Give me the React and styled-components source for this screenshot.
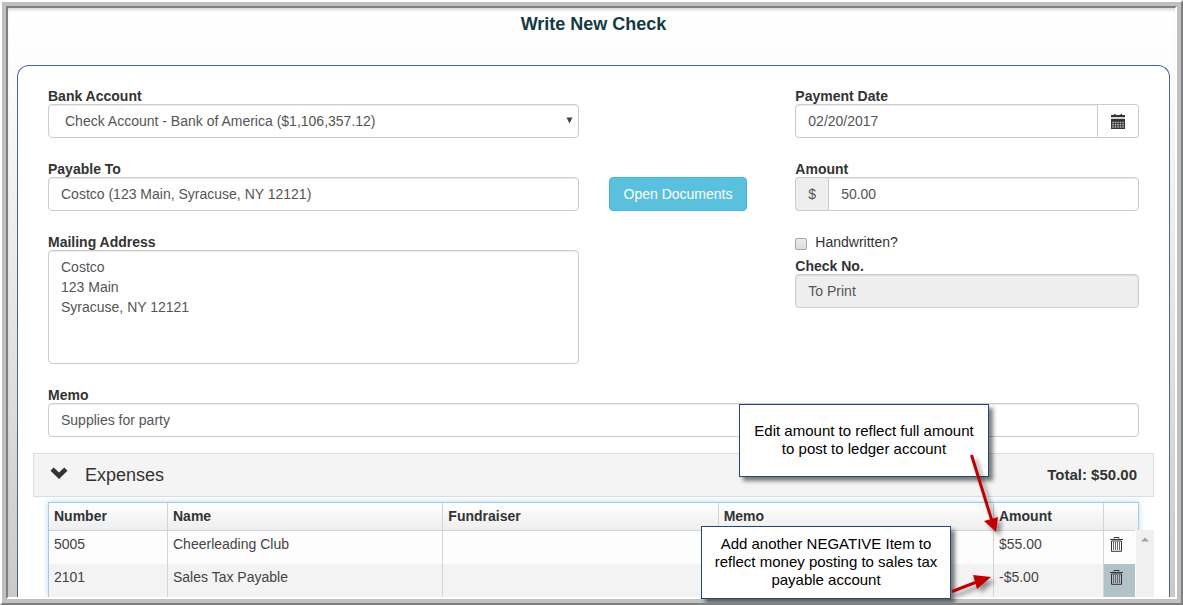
import React from 'react';
import styled, { createGlobalStyle } from 'styled-components';

const GlobalStyle = createGlobalStyle`
  * {
    box-sizing: border-box;
  }

  body {
    margin: 0;
    background: #fff;
    color: #333;
    font: 14px/20px "Liberation Sans", Arial, sans-serif;
  }

  input, select, textarea, button {
    font: inherit;
  }
`;

const Frame = styled.div`
  position: relative;
  height: 100vh;
  overflow: hidden;
  border: 2px solid;
  border-color: #fff #808080 #808080 #fff;
`;

const Bevel = styled.div`
  height: 100%;
  border: 4px solid #c0c0c0;
`;

const Window = styled.div`
  height: 100%;
  overflow: hidden;
  border: 2px solid;
  border-color: #808080 #fff #fff #808080;
  background: linear-gradient(#fff, #fdfdfd 9%, #cacaca);
  box-shadow: inset 0 3px 3px -1px rgba(0, 0, 0, 0.16);
  padding: 0 5px 0 9px;
`;

const Title = styled.h1`
  margin: 0;
  padding: 6px 0 31px;
  color: #133a41;
  font-size: 18px;
  line-height: 20px;
  text-align: center;
`;

const Panel = styled.main`
  border: 1px solid #456990;
  border-bottom: 0;
  border-radius: 12px 12px 0 0;
  background: #fff;
  padding: 22px 15px 0;
`;

const Form = styled.form`
  display: grid;
  grid-template-columns: repeat(12, 1fr);
  gap: 23px 30px;
  padding: 0 15px;
`;

const Field = styled.div`
  display: flex;
  flex-direction: column;
  grid-column: ${(props) => props.$column || 'auto'};
`;

const Stack = styled.div`
  display: flex;
  flex-direction: column;
  gap: 8px;
  grid-column: 9 / span 4;
`;

const Label = styled.label`
  font-weight: bold;
  line-height: 16px;
`;

const Input = styled.input`
  flex: 1 1 auto;
  width: 100%;
  min-width: 0;
  height: 34px;
  border: 1px solid #ccc;
  border-radius: 4px;
  background: #fff;
  padding: 6px 12px;
  color: #555;
  box-shadow: inset 0 1px 1px rgba(0, 0, 0, 0.08);

  &:disabled {
    background: #eee;
  }
`;

const TextArea = styled(Input).attrs({ as: 'textarea' })`
  display: block;
  height: 114px;
  resize: none;
`;

const SelectBox = styled.div`
  position: relative;

  svg {
    position: absolute;
    top: 13px;
    right: 6px;
    pointer-events: none;
  }
`;

const Select = styled(Input).attrs({ as: 'select' })`
  display: block;
  appearance: none;
  padding: 6px 16px;
`;

const InputGroup = styled.div`
  display: flex;

  > :first-child {
    border-top-right-radius: 0;
    border-bottom-right-radius: 0;
  }

  > :last-child {
    border-top-left-radius: 0;
    border-bottom-left-radius: 0;
  }
`;

const Addon = styled.span`
  flex: none;
  border: 1px solid #ccc;
  border-right: 0;
  border-radius: 4px;
  background: #eee;
  padding: 6px 12px;
  color: #555;
`;

const AddonButton = styled.button`
  display: flex;
  flex: none;
  align-items: center;
  border: 1px solid #ccc;
  border-left: 0;
  border-radius: 4px;
  background: #fff;
  padding: 0 13px;
`;

const InfoButton = styled.button`
  grid-column: 7 / span 2;
  align-self: end;
  justify-self: start;
  height: 34px;
  border: 1px solid #46b8da;
  border-radius: 4px;
  background: #5bc0de;
  padding: 0 14px;
  color: #fff;
  white-space: nowrap;
`;

const CheckLabel = styled.label`
  display: flex;
  align-items: flex-end;
  gap: 8px;
  height: 16px;
  line-height: 16px;
`;

const Checkbox = styled.input`
  appearance: none;
  width: 12px;
  height: 12px;
  margin: 0;
  border: 1px solid #a6a6a6;
  border-radius: 2px;
  background: linear-gradient(#ececec, #dcdcdc);

  &:checked {
    background: #456990;
  }
`;

const SectionBar = styled.header`
  display: flex;
  align-items: center;
  height: 44px;
  margin-top: 16px;
  border: 1px solid #ddd;
  background: #f4f4f4;
  padding: 0 16px;
`;

const IconButton = styled.button`
  display: block;
  border: 0;
  background: none;
  padding: 0;
  line-height: 0;
`;

const SectionTitle = styled.h2`
  flex: 1;
  margin: 0 0 0 17px;
  font-size: 18px;
  font-weight: normal;
`;

const Total = styled.strong`
  font-size: 15px;
`;

const Ledger = styled.div`
  display: flex;
  margin: 5px 0 0 15px;
`;

const TableBox = styled.div`
  flex: 1;
  min-width: 0;
`;

const Table = styled.table`
  width: 100%;
  table-layout: fixed;
  border: 1px solid #a9c8e2;
  border-bottom: 0;
  border-spacing: 0;
  box-shadow: 0 0 6px rgba(102, 175, 233, 0.45);
`;

const Th = styled.th`
  width: ${(props) => props.$width || 'auto'};
  height: 28px;
  border-right: 1px solid #d4d4d4;
  border-bottom: 1px solid #d4d4d4;
  background: linear-gradient(#fff, #eee);
  padding: 3px 5px;
  text-align: left;
  vertical-align: top;

  &:last-child {
    border-right: 0;
  }
`;

const Row = styled.tr`
  background: #fdfdfd;
  color: #444;

  &:nth-child(even) {
    background: #f3f3f3;
  }
`;

const Td = styled.td`
  height: 33px;
  border-right: 1px solid #d4d4d4;
  padding: 3px 5px;
  vertical-align: top;

  &:last-child {
    border-right: 0;
    background: ${(props) => (props.$active ? '#b1c3c6' : 'none')};
    padding: 5px 6px;
  }
`;

const ScrollTrack = styled.div`
  position: relative;
  flex: none;
  width: 19px;
  margin: 28px 0 0 -4px;
  border-left: 1px solid #fff;
  background: #f0f0f0;
  padding: 7px 5px;
  line-height: 0;
`;

const Callout = styled.aside`
  position: absolute;
  top: ${(props) => props.$top}px;
  left: ${(props) => props.$left}px;
  display: flex;
  align-items: center;
  width: 250px;
  height: 73px;
  border: 1px solid #1f497d;
  background: #fff;
  padding: 0 8px 2px;
  color: #000;
  font-size: 15px;
  line-height: 18px;
  text-align: center;
  box-shadow: 4px 4px 4px rgba(0, 0, 0, 0.5);

  p {
    width: 100%;
    margin: 0;
  }
`;

const Arrows = styled.svg`
  position: absolute;
  top: 448px;
  left: 938px;
  filter: drop-shadow(4px 4px 2px rgba(0, 0, 0, 0.4));
`;

const CalendarIcon = () => (
  <svg width="14" height="15" viewBox="0 0 14 15" aria-hidden="true">
    <path fill="#333" d="M3 0h1.500v1h5V0H11v1h3v3H0V1h3z" />
    <path fill="#d8d8d8" d="M0 3h14v2H0z" />
    <path fill="#333" d="M0 5h14v10H0z" />
    <path
      stroke="#bbb"
      strokeWidth="1.500"
      strokeDasharray="1.500 1"
      d="M1.250 8.500h11.500M1.250 10.800h11.500M1.250 13h11.500"
    />
  </svg>
);

const TrashIcon = () => (
  <svg width="13" height="16" viewBox="0 0 13 16" fill="none" stroke="#333" aria-hidden="true">
    <path d="M4 2.500v-1h5v1" />
    <path d="M0 3.500h13" />
    <path d="M1.500 5v10.300h10V5z" />
    <path stroke="#666" d="M3.500 6v8M5.500 6v8M7.500 6v8M9.500 6v8" />
  </svg>
);

const ChevronIcon = () => (
  <svg width="18" height="16" viewBox="0 0 18 16" aria-hidden="true">
    <path fill="#333" d="M0.500 3.700 3.700 0.400 9 5.600 14.300 0.400 17.500 3.700 9 12z" />
  </svg>
);

const expenses = [
  { number: '5005', name: 'Cheerleading Club', fundraiser: '', memo: '', amount: '$55.00' },
  { number: '2101', name: 'Sales Tax Payable', fundraiser: '', memo: '', amount: '-$5.00', active: true },
];

export default function App() {
  return (
    <Frame>
      <GlobalStyle />
      <Bevel>
        <Window>
          <Title>Write New Check</Title>
          <Panel>
            <Form>
              <Field $column="1 / span 6">
                <Label htmlFor="account">Bank Account</Label>
                <SelectBox>
                  <Select id="account">
                    <option>Check Account - Bank of America ($1,106,357.12)</option>
                  </Select>
                  <svg width="7" height="7" viewBox="0 0 7 7" aria-hidden="true">
                    <path fill="#444" d="M0.500 0.500h6L3.500 6.500z" />
                  </svg>
                </SelectBox>
              </Field>
              <Field $column="9 / span 4">
                <Label htmlFor="date">Payment Date</Label>
                <InputGroup>
                  <Input id="date" defaultValue="02/20/2017" />
                  <AddonButton type="button" aria-label="Pick a date">
                    <CalendarIcon />
                  </AddonButton>
                </InputGroup>
              </Field>

              <Field $column="1 / span 6">
                <Label htmlFor="payee">Payable To</Label>
                <Input id="payee" defaultValue="Costco (123 Main, Syracuse, NY 12121)" />
              </Field>
              <InfoButton type="button">Open Documents</InfoButton>
              <Field $column="9 / span 4">
                <Label htmlFor="amount">Amount</Label>
                <InputGroup>
                  <Addon>$</Addon>
                  <Input id="amount" defaultValue="50.00" />
                </InputGroup>
              </Field>

              <Field $column="1 / span 6">
                <Label htmlFor="address">Mailing Address</Label>
                <TextArea id="address" defaultValue={'Costco\n123 Main\nSyracuse, NY 12121'} />
              </Field>
              <Stack>
                <CheckLabel>
                  <Checkbox type="checkbox" />
                  Handwritten?
                </CheckLabel>
                <Field>
                  <Label htmlFor="checkNo">Check No.</Label>
                  <Input id="checkNo" defaultValue="To Print" disabled />
                </Field>
              </Stack>

              <Field $column="1 / -1">
                <Label htmlFor="memo">Memo</Label>
                <Input id="memo" defaultValue="Supplies for party" />
              </Field>
            </Form>

            <SectionBar>
              <IconButton type="button" aria-label="Collapse expenses">
                <ChevronIcon />
              </IconButton>
              <SectionTitle>Expenses</SectionTitle>
              <Total>Total: $50.00</Total>
            </SectionBar>

            <Ledger>
              <TableBox>
                <Table>
                  <thead>
                    <tr>
                      <Th $width="119px">Number</Th>
                      <Th>Name</Th>
                      <Th>Fundraiser</Th>
                      <Th>Memo</Th>
                      <Th $width="110px">Amount</Th>
                      <Th $width="34px" />
                    </tr>
                  </thead>
                  <tbody>
                    {expenses.map((item) => (
                      <Row key={item.number}>
                        <Td>{item.number}</Td>
                        <Td>{item.name}</Td>
                        <Td>{item.fundraiser}</Td>
                        <Td>{item.memo}</Td>
                        <Td>{item.amount}</Td>
                        <Td $active={item.active}>
                          <IconButton type="button" aria-label="Delete">
                            <TrashIcon />
                          </IconButton>
                        </Td>
                      </Row>
                    ))}
                  </tbody>
                </Table>
              </TableBox>
              <ScrollTrack>
                <svg width="8" height="5" viewBox="0 0 8 5" aria-hidden="true">
                  <path fill="#a3a3a3" d="M0 4.500 4 0.500l4 4z" />
                </svg>
              </ScrollTrack>
            </Ledger>
          </Panel>
        </Window>
      </Bevel>

      <Callout $top={402} $left={737}>
        <p>Edit amount to reflect full amount to post to ledger account</p>
      </Callout>
      <Callout $top={524} $left={699}>
        <p>Add another NEGATIVE Item to reflect money posting to sales tax payable account</p>
      </Callout>
      <Arrows width="70" height="150" viewBox="0 0 70 150" fill="#c00000" stroke="#c00000" aria-hidden="true">
        <path strokeWidth="3" d="M31.500 5 52 71" />
        <path stroke="none" d="M44 71 58 67 56 82z" />
        <path strokeWidth="3" d="M12 141.500 38 131.500" />
        <path stroke="none" d="M33 125 37 139 51 127z" />
      </Arrows>
    </Frame>
  );
}
